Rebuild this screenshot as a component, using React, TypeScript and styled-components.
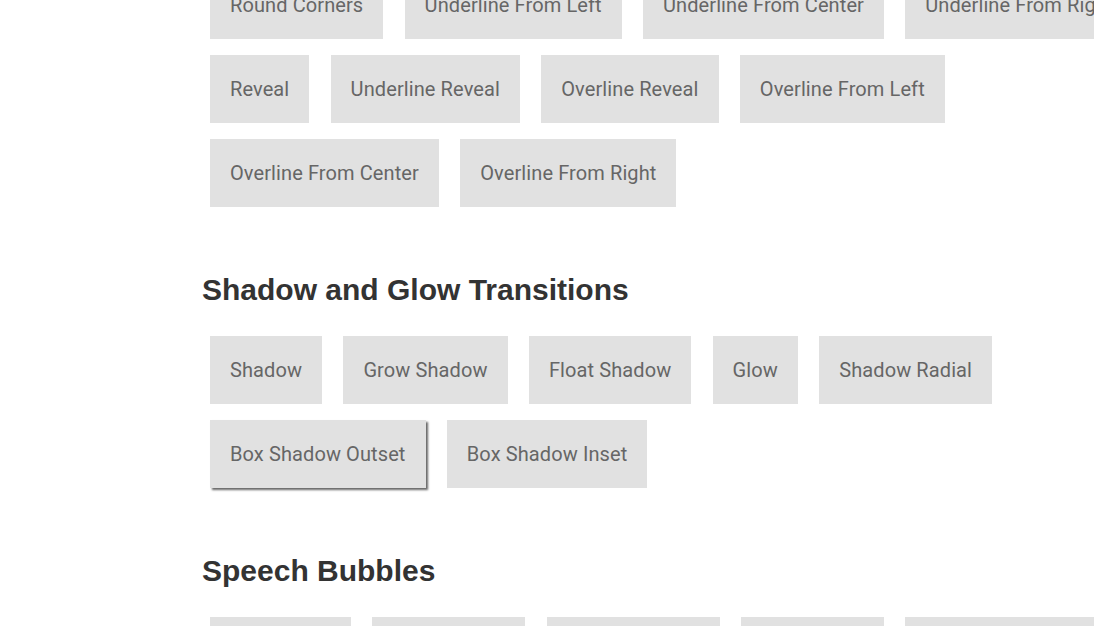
import styled, { createGlobalStyle } from 'styled-components';

const GlobalStyle = createGlobalStyle`
    html, body {
        margin: 0;
        padding: 0;
        background: #fff;
        overflow: hidden;
    }
`;

const Page = styled.div`
    width: 1094px;
    height: 626px;
    overflow: hidden;
`;

const Content = styled.div`
    margin-top: -29px;
    padding-left: 202px;
    width: 950px;
`;

const Heading = styled.h2`
    margin: 65px 0 28px;
    font-family: 'Liberation Sans', Arial, sans-serif;
    font-size: 30px;
    line-height: 36px;
    font-weight: bold;
    color: #333;
`;

const ButtonRow = styled.div`
    display: flex;
    flex-wrap: wrap;
    column-gap: 21.3px;
    row-gap: 16px;
    padding-left: 8px;
`;

const Button = styled.a<{ $outset?: boolean }>`
    display: block;
    flex: none;
    padding: 20px;
    height: 28px;
    background: #e1e1e1;
    color: #666;
    font-family: Roboto, 'Liberation Sans', sans-serif;
    font-size: 20px;
    line-height: 28px;
    letter-spacing: 0.1px;
    white-space: nowrap;
    text-decoration: none;
    cursor: pointer;
    box-shadow: ${(p) => (p.$outset ? '2px 2px 2px rgba(0, 0, 0, 0.6)' : 'none')};
`;

const borderButtons = [
    ['Round Corners', 'Underline From Left', 'Underline From Center', 'Underline From Right'],
    ['Reveal', 'Underline Reveal', 'Overline Reveal', 'Overline From Left'],
    ['Overline From Center', 'Overline From Right'],
];

const shadowButtons = [
    'Shadow',
    'Grow Shadow',
    'Float Shadow',
    'Glow',
    'Shadow Radial',
    'Box Shadow Outset',
    'Box Shadow Inset',
];

const bubbleButtons = [
    'Bubble Top',
    'Bubble Right',
    'Bubble Bottom',
    'Bubble Left',
    'Bubble Float Top',
    'Bubble Float Right',
    'Bubble Float Bottom',
    'Bubble Float Left',
];

function App() {
    return (
        <Page>
            <GlobalStyle />
            <Content>
                <ButtonRow>
                    {borderButtons.flat().map((label) => (
                        <Button key={label}>{label}</Button>
                    ))}
                </ButtonRow>

                <Heading>Shadow and Glow Transitions</Heading>
                <ButtonRow>
                    {shadowButtons.map((label) => (
                        <Button key={label} $outset={label === 'Box Shadow Outset'}>
                            {label}
                        </Button>
                    ))}
                </ButtonRow>

                <Heading>Speech Bubbles</Heading>
                <ButtonRow>
                    {bubbleButtons.map((label) => (
                        <Button key={label}>{label}</Button>
                    ))}
                </ButtonRow>
            </Content>
        </Page>
    );
}

export default App;
